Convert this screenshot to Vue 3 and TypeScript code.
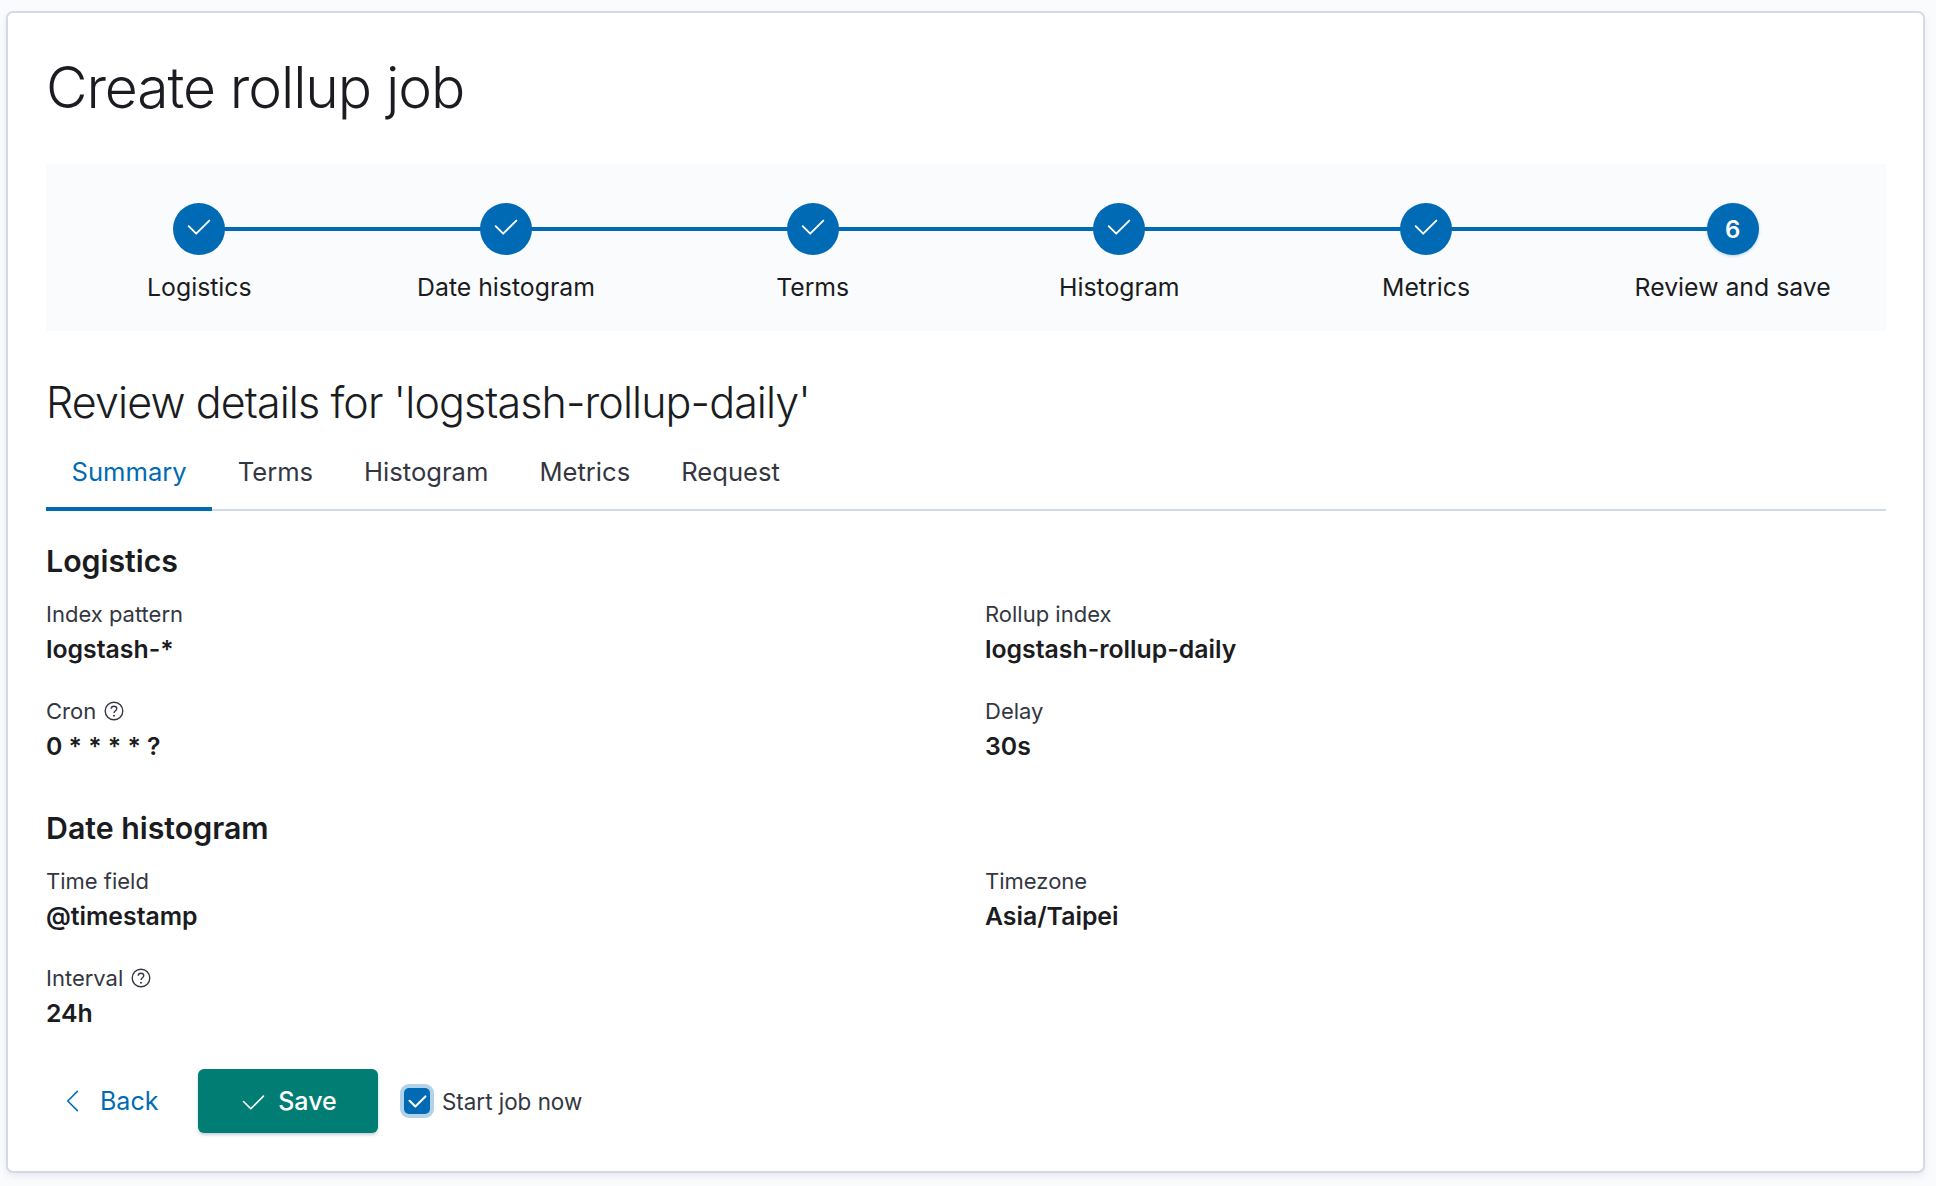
<template>
  <div class="page">
    <div class="card">
      <h1 class="title">Create rollup job</h1>

      <div class="stepper">
        <div v-for="(step, i) in steps" :key="step" class="step">
          <div class="step-circle" :class="{ current: i === steps.length - 1 }">
            <span v-if="i === steps.length - 1">{{ i + 1 }}</span>
            <svg v-else width="30" height="30" viewBox="0 0 16 16" fill="none">
              <path d="M2.5 6.5 6.5 10.5 13.5 3.5" stroke="#fff" stroke-width="1" stroke-linecap="round" stroke-linejoin="round" />
            </svg>
          </div>
          <div class="step-label">{{ step }}</div>
        </div>
      </div>

      <h2 class="review-title">Review details for 'logstash-rollup-daily'</h2>

      <div class="tabs">
        <div v-for="(tab, i) in tabs" :key="tab" class="tab" :class="{ active: i === 0 }">{{ tab }}</div>
      </div>

      <section v-for="section in sections" :key="section.title" class="section">
        <h3 class="section-title">{{ section.title }}</h3>
        <div class="fields">
          <div v-for="field in section.fields" :key="field.label" class="field">
            <div class="field-label">
              {{ field.label }}
              <svg v-if="field.help" class="help" width="22" height="22" viewBox="0 0 16 16" fill="none">
                <circle cx="8" cy="8" r="6.4" stroke="#343741" stroke-width="1" />
                <path d="M6 6.4C6 5.2 6.9 4.5 8 4.5s2 .7 2 1.8c0 1.5-2 1.6-2 3.2" stroke="#343741" stroke-width="1" />
                <circle cx="8" cy="11.4" r=".7" fill="#343741" />
              </svg>
            </div>
            <div class="field-value">{{ field.value }}</div>
          </div>
        </div>
      </section>

      <div class="actions">
        <button class="back">
          <svg width="28" height="28" viewBox="0 0 16 16" fill="none">
            <path d="M10.5 2.5 5 8l5.5 5.5" stroke="#006bb4" stroke-width="0.85" stroke-linecap="round" />
          </svg>
          Back
        </button>
        <button class="save">
          <svg width="29" height="29" viewBox="0 0 16 16" fill="none">
            <path d="M2.5 8 6.5 12 13.5 5" stroke="#fff" stroke-width="0.9" stroke-linecap="round" stroke-linejoin="round" />
          </svg>
          Save
        </button>
        <label class="start">
          <span class="checkbox">
            <svg width="23" height="23" viewBox="0 0 16 16" fill="none">
              <path d="M2.5 7.5 6.5 11.5 13.5 4.5" stroke="#fff" stroke-width="1.5" stroke-linecap="round" stroke-linejoin="round" />
            </svg>
          </span>
          Start job now
        </label>
      </div>
    </div>
  </div>
</template>

<script setup lang="ts">
interface Field {
  label: string
  value: string
  help?: boolean
}

const steps = ['Logistics', 'Date histogram', 'Terms', 'Histogram', 'Metrics', 'Review and save']
const tabs = ['Summary', 'Terms', 'Histogram', 'Metrics', 'Request']

const sections: { title: string; fields: Field[] }[] = [
  {
    title: 'Logistics',
    fields: [
      { label: 'Index pattern', value: 'logstash-*' },
      { label: 'Rollup index', value: 'logstash-rollup-daily' },
      { label: 'Cron', value: '0 * * * * ?', help: true },
      { label: 'Delay', value: '30s' },
    ],
  },
  {
    title: 'Date histogram',
    fields: [
      { label: 'Time field', value: '@timestamp' },
      { label: 'Timezone', value: 'Asia/Taipei' },
      { label: 'Interval', value: '24h', help: true },
    ],
  },
]
</script>

<style>
html,
body {
  margin: 0;
  background: #fafbfd;
}
</style>

<style scoped>
.page {
  box-sizing: border-box;
  width: 1936px;
  height: 1186px;
  padding: 11px 11px 13px 6px;
  font-family: Inter, "Liberation Sans", sans-serif;
  color: #1a1c21;
}

.card {
  box-sizing: border-box;
  height: 100%;
  padding: 0 37px 0 38px;
  background: #fff;
  border: 2px solid #d3dae6;
  border-radius: 7px;
  box-shadow: 0 3px 6px rgba(152, 162, 179, 0.2);
}

.title {
  margin: 41px 0 0;
  font-size: 57px;
  line-height: 68px;
  font-weight: 300;
  letter-spacing: -1.1px;
}

.stepper {
  display: grid;
  grid-template-columns: repeat(6, 1fr);
  height: 167px;
  margin-top: 42px;
  background: #fafbfd;
}

.step {
  position: relative;
  display: flex;
  flex-direction: column;
  align-items: center;
  padding-top: 39px;
}

.step:not(:last-child)::after {
  content: '';
  position: absolute;
  top: 63px;
  left: 50%;
  width: 100%;
  height: 4px;
  background: #006bb4;
}

.step-circle {
  position: relative;
  z-index: 1;
  display: flex;
  align-items: center;
  justify-content: center;
  width: 52px;
  height: 52px;
  border-radius: 50%;
  background: #006bb4;
  color: #fff;
  font-size: 24px;
  font-weight: 600;
}

.step-circle.current {
  box-shadow: 0 1px 3px rgba(0, 107, 180, 0.3);
}

.step-label {
  margin-top: 18px;
  font-size: 24.8px;
  line-height: 29px;
  white-space: nowrap;
}

.review-title {
  margin: 45px 0 0;
  font-size: 43px;
  line-height: 52px;
  font-weight: 300;
  letter-spacing: -0.9px;
}

.tabs {
  display: flex;
  margin-top: 22px;
  border-bottom: 2px solid #d3dae6;
}

.tab {
  padding: 0 25.5px;
  height: 61px;
  line-height: 44px;
  font-size: 25.6px;
  color: #343741;
  margin-bottom: -2px;
}

.tab.active {
  color: #006bb4;
  border-bottom: 4px solid #006bb4;
  height: 57px;
}

.section {
  margin-top: 30px;
}

.section + .section {
  margin-top: 46px;
}

.section-title {
  margin: 0;
  font-size: 30.3px;
  line-height: 40px;
  font-weight: 600;
}

.fields {
  display: grid;
  grid-template-columns: 1fr 1fr;
  column-gap: 38px;
  row-gap: 32px;
  margin-top: 19px;
}

.field-label {
  display: flex;
  align-items: center;
  gap: 7px;
  height: 28px;
  font-size: 22px;
  color: #343741;
}

.field-value {
  margin-top: 5px;
  font-size: 24.8px;
  line-height: 32px;
  font-weight: 600;
}

.actions {
  display: flex;
  align-items: center;
  margin-top: 40px;
}

.back {
  display: flex;
  align-items: center;
  gap: 13px;
  width: 152px;
  height: 64px;
  padding: 0 0 0 13px;
  border: none;
  background: none;
  font: inherit;
  font-size: 25px;
  color: #006bb4;
}

.save {
  display: flex;
  align-items: center;
  justify-content: center;
  gap: 10px;
  width: 180px;
  height: 64px;
  padding: 0;
  border: none;
  border-radius: 6px;
  background: #017d73;
  box-shadow: 0 2px 3px rgba(152, 162, 179, 0.5);
  font: inherit;
  font-size: 25px;
  font-weight: 500;
  color: #fff;
}

.start {
  display: flex;
  align-items: center;
  gap: 12px;
  margin-left: 26px;
  font-size: 22.4px;
  color: #343741;
}

.checkbox {
  display: flex;
  align-items: center;
  justify-content: center;
  width: 26px;
  height: 26px;
  border-radius: 5px;
  background: #006bb4;
  box-shadow: 0 0 0 4px rgba(0, 107, 180, 0.3);
}
</style>
